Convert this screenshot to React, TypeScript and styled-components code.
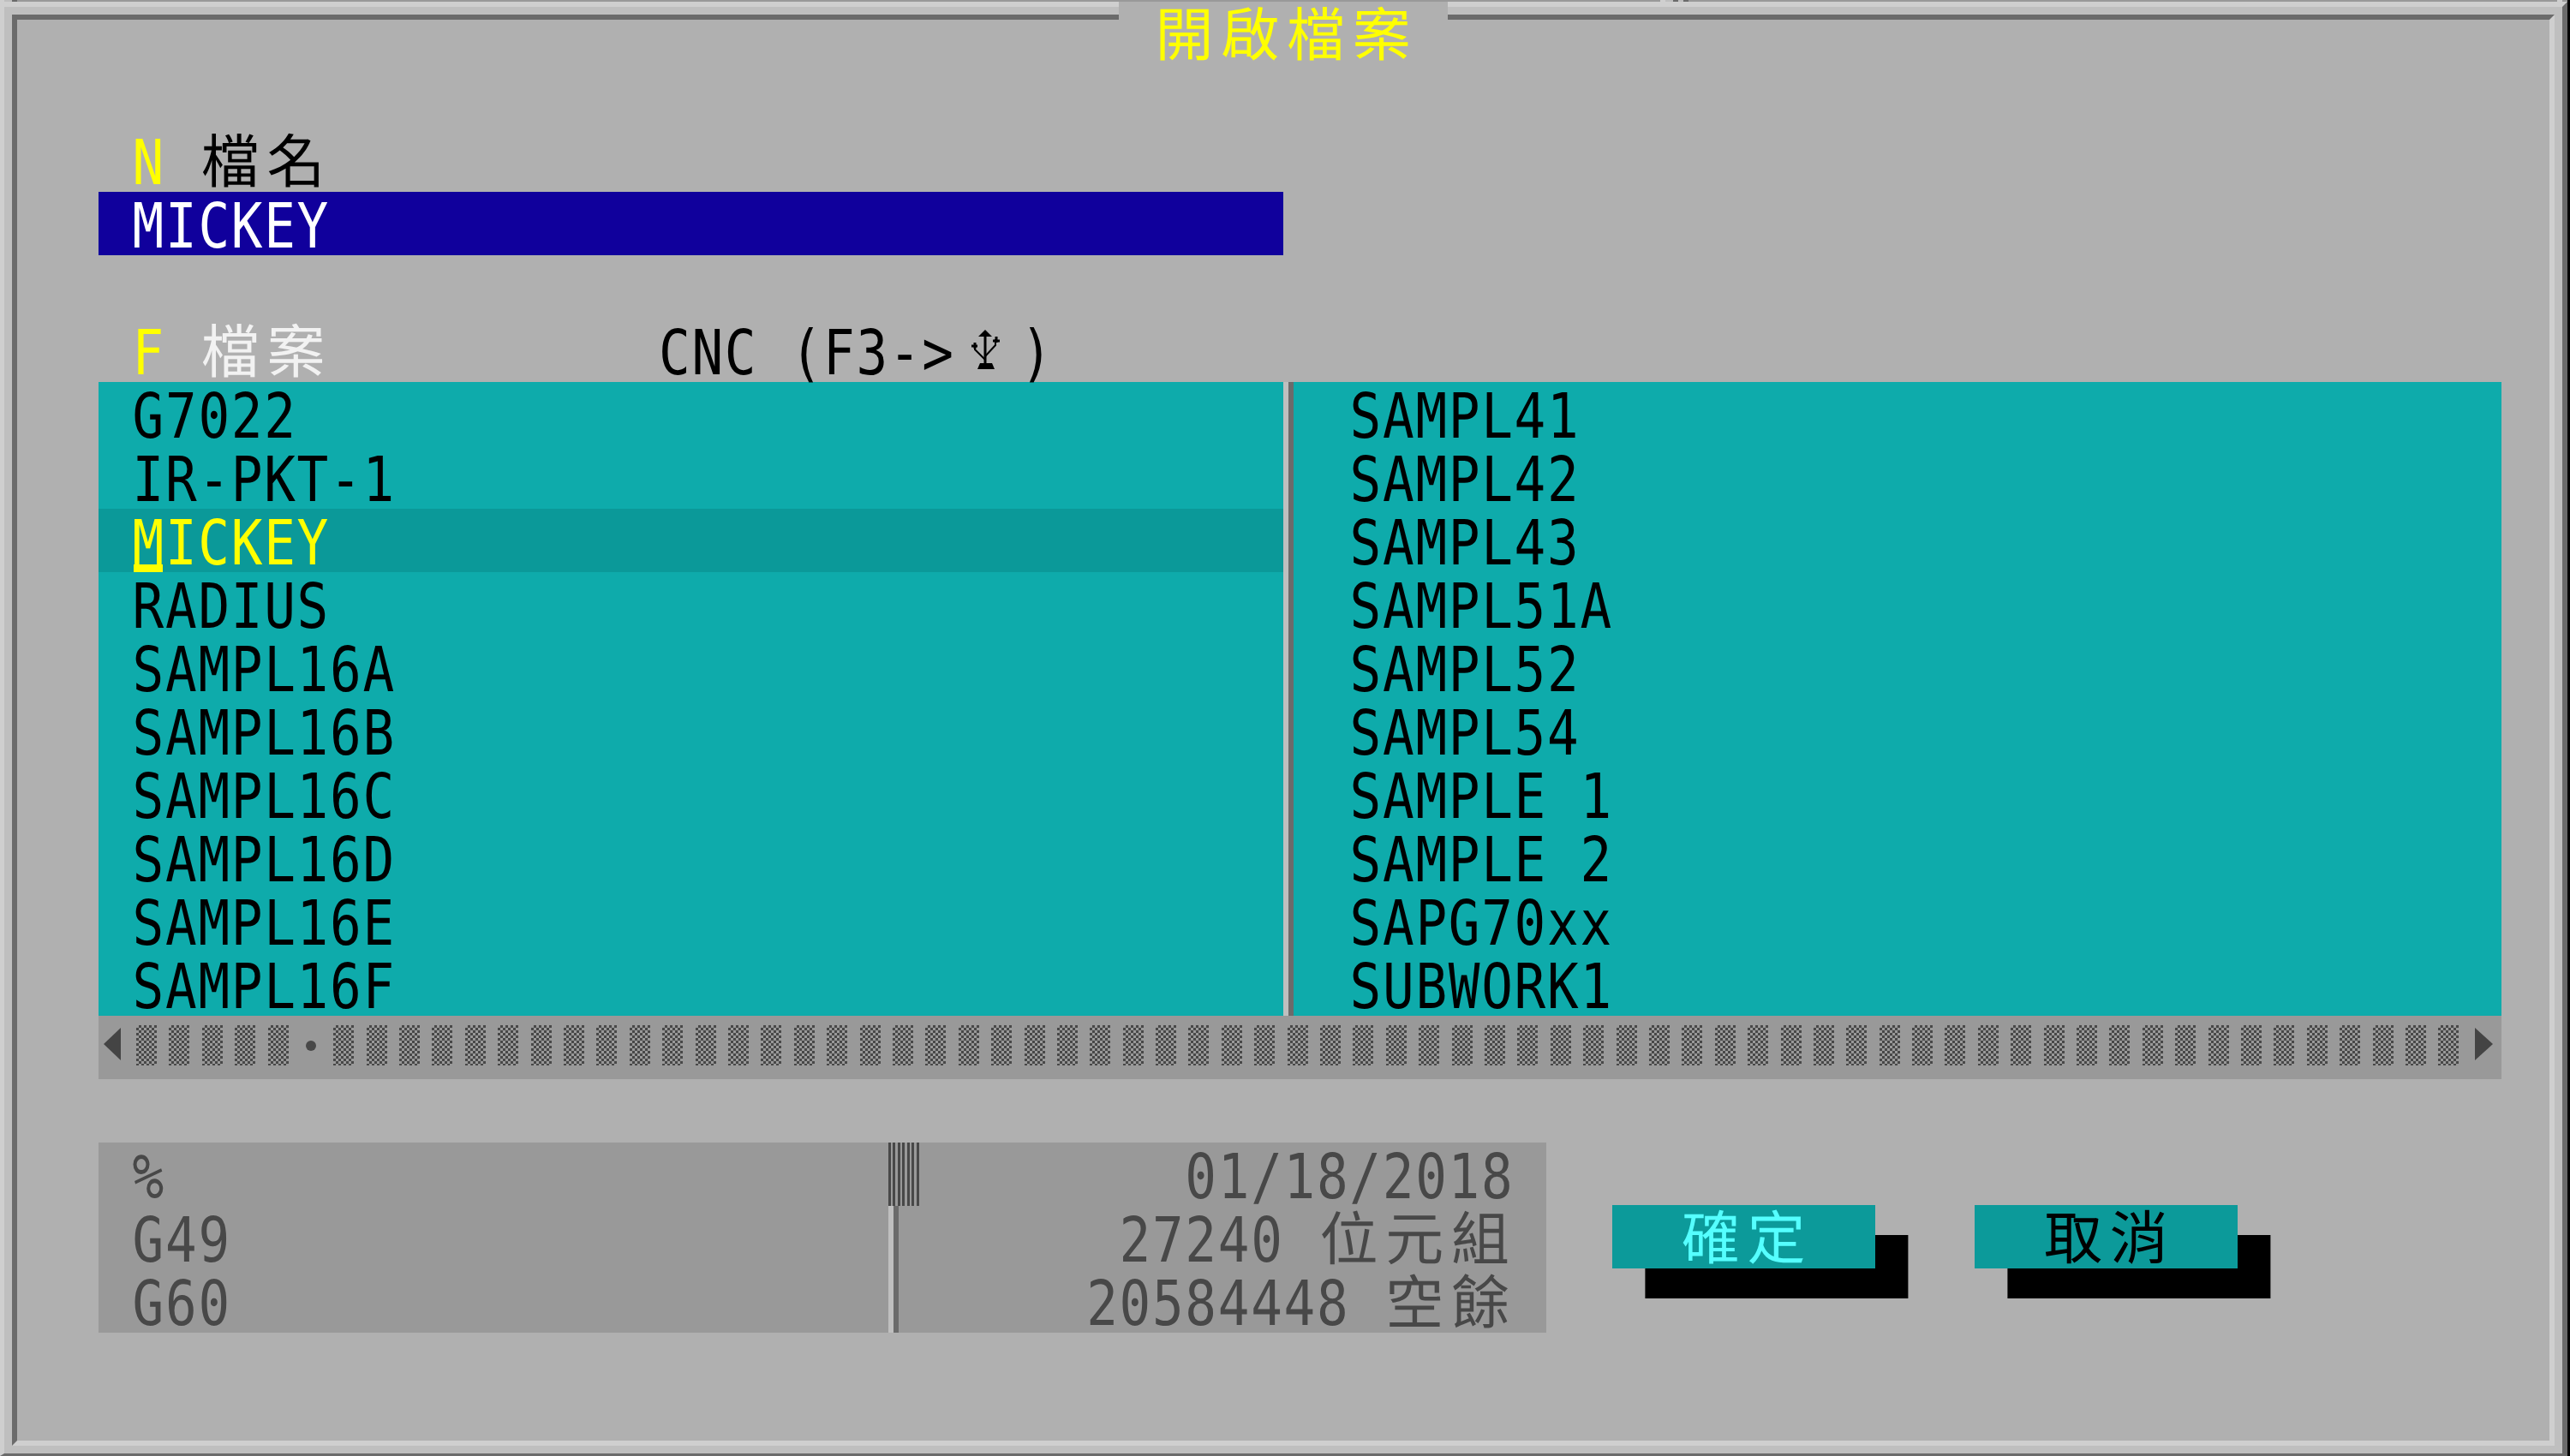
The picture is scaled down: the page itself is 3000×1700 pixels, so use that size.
import React from "react";
import styled, { createGlobalStyle } from "styled-components";

const CELL = 38.4;

const Global = createGlobalStyle`
  html, body { margin: 0; padding: 0; background: #b0b0b0; }
  * { box-sizing: border-box; }
`;

const Screen = styled.div`
  position: relative;
  width: 3000px;
  height: 1700px;
  display: flex;
  flex-direction: column;
  padding-top: 2px;
  border-right: 3px solid #000;
  color: #000;
  background: linear-gradient(to right,
    #cfcfcf 0 5px, #bfbfbf 5px 14px, #6b6b6b 14px 20px, #999 20px 1938px,
    #cfcfcf 1938px 1944px, #bfbfbf 1944px 1953px, #6b6b6b 1953px 1959px,
    #bfbfbf 1959px 1965px, #6b6b6b 1965px 1971px, #999 1971px 2985px,
    #cfcfcf 2985px 2991px, #999 2991px 3000px);
  font-family: "DejaVu Sans Mono", "Noto Sans CJK TC", monospace;
  text-rendering: geometricPrecision;
`;

const OuterEdge = styled.div`
  flex: 1;
  display: flex;
  border-style: solid;
  border-width: 6px 6px 3px 5px;
  border-color: #cfcfcf #6b6b6b #6b6b6b #cfcfcf;
`;

const MidBand = styled.div`
  flex: 1;
  display: flex;
  padding: 9px;
  background: #bfbfbf;
`;

const Body = styled.div`
  flex: 1;
  border-style: solid;
  border-width: 6px;
  border-color: #6b6b6b #cfcfcf #cfcfcf #6b6b6b;
  background: #b0b0b0;
  padding: 127px 0 0 95.2px;
`;

const TitleBar = styled.div`
  position: absolute;
  top: 2px;
  left: ${34 * CELL}px;
  width: ${10 * CELL}px;
  height: 74px;
  display: flex;
  justify-content: center;
  align-items: center;
  background: #b0b0b0;
  color: #ffff00;
`;

const Line = styled.div<{ $color?: string; $bg?: string; $pad?: number; $end?: boolean }>`
  height: 74px;
  display: flex;
  align-items: center;
  justify-content: ${(p) => (p.$end ? "flex-end" : "flex-start")};
  color: ${(p) => p.$color ?? "inherit"};
  background: ${(p) => p.$bg ?? "transparent"};
  padding-left: ${(p) => p.$pad ?? 0}px;
  padding-right: ${(p) => (p.$end ? CELL : 0)}px;
`;

const Latin = styled.span<{ $color?: string }>`
  display: inline-block;
  flex: none;
  font-size: 61px;
  letter-spacing: 1.68px;
  line-height: 62px;
  height: 62px;
  white-space: pre;
  color: ${(p) => p.$color ?? "inherit"};
  transform: translate(1px, 4px) scaleY(1.19);
`;

const Han = styled.span<{ $color?: string }>`
  display: inline-block;
  flex: none;
  width: ${2 * CELL}px;
  text-align: center;
  font-family: "Noto Sans CJK TC", sans-serif;
  font-size: 68px;
  line-height: 66px;
  height: 66px;
  color: ${(p) => p.$color ?? "inherit"};
  transform: translateY(-3px);
`;

const Hotkey = styled.span`
  position: relative;
  display: flex;
  align-items: center;
  flex: none;
  width: ${CELL}px;
  height: 74px;
  &::after {
    content: "";
    position: absolute;
    left: 2.4px;
    right: 2.4px;
    bottom: 0;
    height: 9px;
    background: #ffff00;
  }
`;

const InputField = styled(Line)`
  width: ${36 * CELL}px;
`;

const Gap = styled.div`
  height: 74px;
`;

const ListPane = styled.div`
  display: grid;
  grid-template-columns: 1383px 12px 1410px;
  width: 2805px;
  height: 740px;
  background: #0eabab;
`;

const Divider = styled.div`
  background: linear-gradient(to right, #bfbfbf 0 6px, #6b6b6b 6px 12px);
`;

const ScrollBar = styled.div`
  display: grid;
  grid-template-columns: repeat(73, ${CELL}px);
  width: 2805px;
  height: 74px;
  background: #999;
`;

const ArrowCell = styled.div<{ $inset: number }>`
  padding: 14px 0 0 ${(p) => p.$inset}px;
  svg { display: block; }
`;

const TrackCell = styled.div`
  padding: 11px 0 0 5.4px;
`;

const Checker = styled.div`
  width: 24px;
  height: 47px;
  background-image: repeating-conic-gradient(#484848 0 25%, #999 0 50%);
  background-size: 6px 6px;
`;

const Dot = styled.div`
  width: 12px;
  height: 12px;
  margin: 18px 0 0 6px;
  border-radius: 50%;
  background: #484848;
`;

const BottomRow = styled.div`
  display: flex;
  align-items: flex-start;
`;

const InfoPanel = styled.div`
  display: grid;
  grid-template-columns: ${24 * CELL}px ${CELL}px 1fr;
  width: ${44 * CELL}px;
  height: 222px;
  background: #999;
  color: #484848;
`;

const InfoSplit = styled.div`
  display: flex;
  flex-direction: column;
`;

const SplitThumb = styled.div`
  height: 74px;
  background: repeating-linear-gradient(to right, #484848 0 3px, #999 3px 5.45px);
`;

const SplitRail = styled.div`
  flex: 1;
  background: linear-gradient(to right, #bfbfbf 0 6px, #6b6b6b 6px 12px, transparent 12px);
`;

const Buttons = styled.div`
  display: flex;
  gap: 116px;
  margin: 73px 0 0 76.8px;
`;

const DialogButton = styled.div<{ $color: string }>`
  width: 307.2px;
  height: 74px;
  display: flex;
  justify-content: center;
  align-items: center;
  background: #0c9a9a;
  color: ${(p) => p.$color};
  box-shadow: 38.4px 35px 0 0 #000;
`;

const UsbCell = styled.span`
  flex: none;
  width: ${2 * CELL}px;
  display: flex;
  justify-content: center;
  svg { display: block; transform: translate(-1px, -1px); }
`;

const left = ["G7022", "IR-PKT-1", "MICKEY", "RADIUS", "SAMPL16A", "SAMPL16B", "SAMPL16C", "SAMPL16D", "SAMPL16E", "SAMPL16F"];
const right = ["SAMPL41", "SAMPL42", "SAMPL43", "SAMPL51A", "SAMPL52", "SAMPL54", "SAMPLE 1", "SAMPLE 2", "SAPG70xx", "SUBWORK1"];

function UsbIcon() {
  return (
    <svg width="34" height="46" viewBox="0 0 34 46" fill="none" stroke="#000" strokeWidth="2">
      <path d="M16 0 L8 8 H24 Z" fill="#000" stroke="none" />
      <path d="M16 6 V40" strokeWidth="3" />
      <path d="M7 46 L10 39 H24 L27 46 Z" fill="#000" stroke="none" />
      <path d="M16 35 L4 23 V17" />
      <path d="M16 31 L28 18 V11" />
      <path d="M0 19 H7 M4 15 V22" strokeWidth="3" />
      <path d="M25 13 H33 M29 8 V15" strokeWidth="3" />
    </svg>
  );
}

export default function App() {
  return (
    <Screen>
      <Global />
      <OuterEdge>
        <MidBand>
          <Body>
            <Line $pad={CELL}>
              <Latin $color="#ffff00">{"N "}</Latin>
              <Han>檔</Han>
              <Han>名</Han>
            </Line>
            <InputField $bg="#10009c" $color="#fff" $pad={CELL}>
              <Latin>MICKEY</Latin>
            </InputField>
            <Gap />
            <Line $pad={CELL}>
              <Latin $color="#ffff00">{"F "}</Latin>
              <Han $color="#f2f2f2">檔</Han>
              <Han $color="#f2f2f2">案</Han>
              <Latin>{"          CNC (F3->"}</Latin>
              <UsbCell><UsbIcon /></UsbCell>
              <Latin>)</Latin>
            </Line>
            <ListPane>
              <div>
                {left.map((name) =>
                  name === "MICKEY" ? (
                    <Line key={name} $pad={CELL} $bg="#0b9999" $color="#ffff00">
                      <Hotkey><Latin>M</Latin></Hotkey>
                      <Latin>ICKEY</Latin>
                    </Line>
                  ) : (
                    <Line key={name} $pad={CELL}><Latin>{name}</Latin></Line>
                  )
                )}
              </div>
              <Divider />
              <div>
                {right.map((name) => (
                  <Line key={name} $pad={64.4}><Latin>{name}</Latin></Line>
                ))}
              </div>
            </ListPane>
            <ScrollBar>
              <ArrowCell $inset={6}>
                <svg width="20" height="38" viewBox="0 0 20 38"><path d="M20 0 V38 L0 19 Z" fill="#444" /></svg>
              </ArrowCell>
              {Array.from({ length: 71 }, (_, i) => (
                <TrackCell key={i}>{i === 5 ? <Dot /> : <Checker />}</TrackCell>
              ))}
              <ArrowCell $inset={10}>
                <svg width="21" height="38" viewBox="0 0 21 38"><path d="M0 0 V38 L21 19 Z" fill="#444" /></svg>
              </ArrowCell>
            </ScrollBar>
            <Gap />
            <BottomRow>
              <InfoPanel>
                <div>
                  <Line $pad={CELL}><Latin>%</Latin></Line>
                  <Line $pad={CELL}><Latin>G49</Latin></Line>
                  <Line $pad={CELL}><Latin>G60</Latin></Line>
                </div>
                <InfoSplit>
                  <SplitThumb />
                  <SplitRail />
                </InfoSplit>
                <div>
                  <Line $end><Latin>01/18/2018</Latin></Line>
                  <Line $end><Latin>{"27240 "}</Latin><Han>位</Han><Han>元</Han><Han>組</Han></Line>
                  <Line $end><Latin>{"20584448 "}</Latin><Han>空</Han><Han>餘</Han></Line>
                </div>
              </InfoPanel>
              <Buttons>
                <DialogButton $color="#55ffff"><Han>確</Han><Han>定</Han></DialogButton>
                <DialogButton $color="#000"><Han>取</Han><Han>消</Han></DialogButton>
              </Buttons>
            </BottomRow>
          </Body>
        </MidBand>
      </OuterEdge>
      <TitleBar><Han>開</Han><Han>啟</Han><Han>檔</Han><Han>案</Han></TitleBar>
    </Screen>
  );
}
